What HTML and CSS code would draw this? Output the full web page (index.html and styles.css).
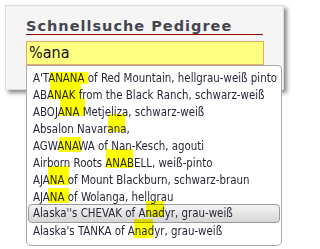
FILE: index.html
```html
<!DOCTYPE html>
<html lang="de">
<head>
<meta charset="utf-8">
<link rel="stylesheet" href="styles.css">
</head>
<body>
<div class="panel">
  <h2 class="title">Schnellsuche Pedigree</h2>
  <div class="search">
    <div class="input">%ana</div>
    <div class="dropdown">
      <ul class="list">
        <li class="item">A'TANANA of Red Mountain, hellgrau-weiß pinto</li>
        <li class="item">ABANAK from the Black Ranch, schwarz-weiß</li>
        <li class="item">ABOJANA Metjeliza, schwarz-weiß</li>
        <li class="item">Absalon Navarana,</li>
        <li class="item">AGWANAWA of Nan-Kesch, agouti</li>
        <li class="item">Airborn Roots ANABELL, weiß-pinto</li>
        <li class="item">AJANA of Mount Blackburn, schwarz-braun</li>
        <li class="item">AJANA of Wolanga, hellgrau</li>
        <li class="item selected">Alaska''s CHEVAK of Anadyr, grau-weiß</li>
        <li class="item">Alaska's TANKA of Anadyr, grau-weiß</li>
      </ul>
      <span class="hl" style="left:23px;top:6px;width:38px;height:12px"></span>
      <span class="hl" style="left:23px;top:17px;width:31px;height:16px"></span>
      <span class="hl" style="left:33px;top:32px;width:25px;height:18px"></span>
      <span class="hl" style="left:81px;top:48px;width:17px;height:18px"></span>
      <span class="hl" style="left:32px;top:71px;width:22px;height:15px"></span>
      <span class="hl" style="left:79px;top:83px;width:27px;height:19px"></span>
      <span class="hl" style="left:21px;top:100px;width:21px;height:19px"></span>
      <span class="hl" style="left:21px;top:122px;width:21px;height:15px"></span>
      <span class="hl" style="left:119px;top:135px;width:18px;height:16px"></span>
      <span class="hl" style="left:107px;top:153px;width:19px;height:19px"></span>
    </div>
  </div>
</div>
</body>
</html>
```
FILE: styles.css
```css
html, body {
  margin: 0;
  padding: 0;
  background: #ffffff;
}
body {
  min-height: 249px;
  font-family: "DejaVu Sans Condensed", "DejaVu Sans", Tahoma, sans-serif;
  color: #28283a;
}
.panel {
  margin: 5px 0 0 5px;
  width: 237px;
  height: 60px;
  padding: 12px 20px 11px 20px;
  background: #f5f5f5;
  border: 1px solid #dcdcdc;
  box-shadow: 3px 3px 4px rgba(0, 0, 0, 0.45);
}
.title {
  margin: 0;
  font-family: "DejaVu Sans", sans-serif;
  font-size: 14.5px;
  letter-spacing: 1px;
  line-height: 16px;
  font-weight: bold;
  color: #454550;
  border-bottom: 1px solid #990000;
}
.search {
  position: relative;
  margin-top: 6px;
}
.input {
  box-sizing: border-box;
  width: 238px;
  height: 24px;
  padding: 0 2px;
  border: 1px solid #dcae62;
  background: #ffff80;
  font-size: 16px;
  line-height: 22px;
  color: #101010;
}
.dropdown {
  position: absolute;
  left: 0;
  top: 24px;
  box-sizing: border-box;
  width: 256px;
  height: 181px;
  background: #ffffff;
  border: 1px solid #a8a8a8;
  border-radius: 0 4px 5px 5px;
  z-index: 2;
}
.list {
  list-style: none;
  margin: 0;
  padding: 4px 0 0 0;
}
.item {
  height: 17px;
  line-height: 17px;
  padding-left: 6px;
  font-size: 11.4px;
  white-space: nowrap;
}
.item.selected {
  margin: -2px 1px 0 1px;
  padding-left: 4px;
  border: 1px solid #9a9a9a;
  border-radius: 4px;
  background: linear-gradient(#f4f4f4, #d6d6d6);
}
.hl {
  position: absolute;
  background: #ffff00;
  mix-blend-mode: multiply;
}
```
